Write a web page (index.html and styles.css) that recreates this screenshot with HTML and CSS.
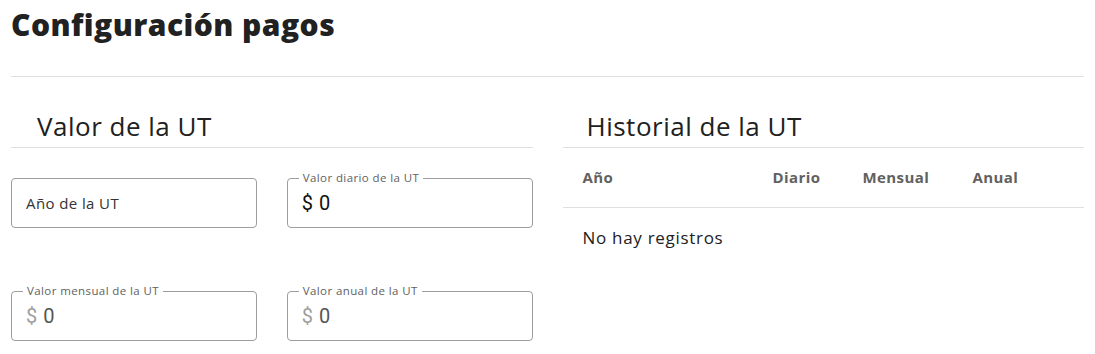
FILE: index.html
```html
<html lang="es">

<head>
    <meta charset="UTF-8">
    <meta name="viewport" content="width=device-width, initial-scale=1.0">
    <title>Configuración pagos</title>

    <link rel="stylesheet" href="styles.css">
</head>

<body>
    <div class="page">
        <h1 class="title">Configuración pagos</h1>
        <hr class="divider">

        <div class="columns">
            <section class="panel">
                <h2 class="panel-title">Valor de la UT</h2>
                <div class="form-grid">
                    <div class="field">
                        <span class="placeholder">Año de la UT</span>
                    </div>
                    <div class="field">
                        <span class="legend">Valor diario de la UT</span>
                        <span class="value"><span class="prefix">$</span>0</span>
                    </div>
                    <div class="field">
                        <span class="legend">Valor mensual de la UT</span>
                        <span class="value muted"><span class="prefix grey">$</span>0</span>
                    </div>
                    <div class="field">
                        <span class="legend">Valor anual de la UT</span>
                        <span class="value muted"><span class="prefix grey">$</span>0</span>
                    </div>
                </div>
            </section>

            <section class="panel">
                <h2 class="panel-title right">Historial de la UT</h2>
                <table class="history">
                    <thead>
                        <tr>
                            <th class="col-year">Año</th>
                            <th class="col-day">Diario</th>
                            <th class="col-month">Mensual</th>
                            <th>Anual</th>
                        </tr>
                    </thead>
                    <tbody>
                        <tr>
                            <td colspan="4">No hay registros</td>
                        </tr>
                    </tbody>
                </table>
            </section>
        </div>
    </div>
</body>

</html>
```

FILE: styles.css
```css
* {
    box-sizing: border-box;
    margin: 0;
    padding: 0;
}

body {
    font-family: "Open Sans", "Noto Sans", sans-serif;
    color: #212121;
    background: white;
}

.page {
    padding: 0 11px;
}

.title {
    font-size: 30px;
    font-weight: 800;
    letter-spacing: 0.45px;
    line-height: 36px;
    padding-top: 7px;
    margin-bottom: 33px;
}

.divider {
    border: 0;
    border-top: 1px solid #e0e0e0;
}

.columns {
    display: grid;
    grid-template-columns: 1fr 1fr;
    column-gap: 30px;
}

.panel-title {
    font-size: 26px;
    font-weight: 400;
    letter-spacing: 0.5px;
    line-height: 32px;
    padding: 33px 0 5px 26px;
    border-bottom: 1px solid #e0e0e0;
}

.panel-title.right {
    padding-left: 24px;
}

.form-grid {
    display: grid;
    grid-template-columns: 1fr 1fr;
    column-gap: 30px;
    row-gap: 63px;
    margin-top: 30px;
}

.field {
    position: relative;
    height: 50px;
    border: 1px solid #9e9e9e;
    border-radius: 4px;
    display: flex;
    align-items: center;
    padding-left: 14px;
}

.legend {
    position: absolute;
    top: -8px;
    left: 11px;
    padding: 0 4px;
    background: white;
    font-size: 11.5px;
    letter-spacing: 0.4px;
    line-height: 14px;
    color: #616161;
}

.placeholder {
    font-size: 15px;
    letter-spacing: 0.4px;
    color: #333333;
}

.value {
    font-family: Roboto, "Liberation Sans", sans-serif;
    font-size: 20px;
    color: #111111;
}

.value.muted {
    color: #555555;
}

.prefix {
    margin-right: 6px;
}

.grey {
    color: #9e9e9e;
}

.history {
    width: 100%;
    border-collapse: collapse;
}

.history th,
.history td {
    text-align: left;
    padding: 0 0 0 20px;
    border-bottom: 1px solid #e0e0e0;
}

.history th {
    height: 59px;
    font-size: 15px;
    font-weight: 700;
    letter-spacing: 0.4px;
    color: #616161;
}

.history td {
    height: 60px;
    font-size: 17px;
    letter-spacing: 0.7px;
    border-bottom: 0;
}

.col-year {
    width: 190px;
}

.col-day {
    width: 90px;
}

.col-month {
    width: 110px;
}
```
